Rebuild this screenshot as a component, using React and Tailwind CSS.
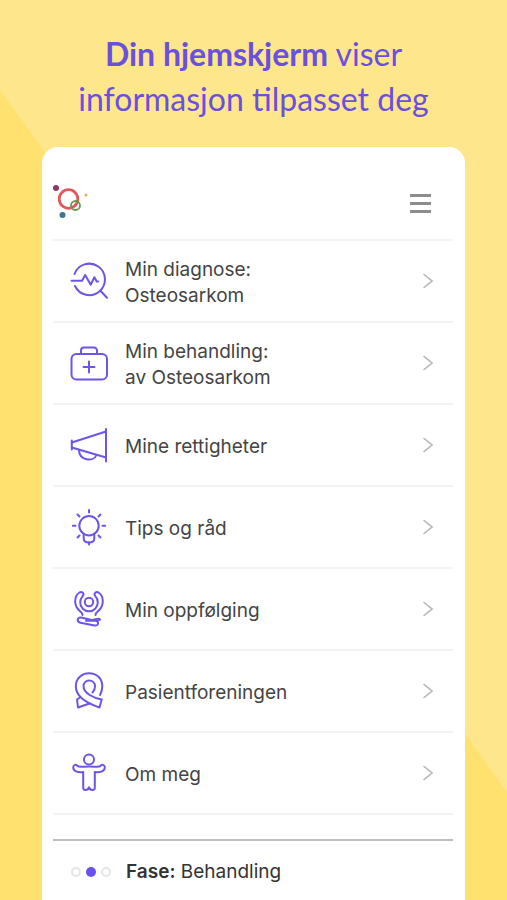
const DiagnoseIcon = () => (
  <>
    <path d="M5.500 13A15.700 15.700 0 1 1 6 25" />
    <path d="M2.500 19.700H13l3.200-5.700 5.500 9.700 3.700-7.500 2.300 4.300h1.500" />
    <path d="M31.700 30 38 36.700" />
  </>
);

const BehandlingIcon = () => (
  <>
    <rect x="2.500" y="11" width="35.500" height="25.500" rx="5" />
    <path d="M12 11V7.500a3 3 0 0 1 3-3h10a3 3 0 0 1 3 3V11" />
    <path d="M20 18.500v11M14.500 24h11" />
  </>
);

const RettigheterIcon = () => (
  <>
    <path d="M2.800 15.500v9" />
    <path d="M37 4v32.500" />
    <path d="M2.800 17.500 37 6.500M2.800 22.500 37 32.500" />
    <path d="M10 25c0 10.500 14.500 12.500 17.500 5" />
  </>
);

const TipsIcon = () => (
  <>
    <circle cx="20" cy="18.700" r="9.700" />
    <path d="M14.700 27.500v4c0 2.500 2.300 4 5.300 4s5.300-1.500 5.300-4v-4" />
    <path d="M20 35.500v2" />
    <path d="M20 3v2.500M3.800 18.700h2.700M33.500 18.700h2.700M8.500 7.500l2 2M31.500 7.500l-2 2M8.500 30.500l2-2M31.500 30.500l-2-2" />
  </>
);

const OppfolgingIcon = () => (
  <>
    <circle cx="20" cy="13" r="4.200" />
    <path d="M13.500 26c0-4.500-7.300-4-7.300-13.500 0-4 1.800-7.500 4.300-9 2.500-1.300 5 .8 3.500 3.200-1.800 2-2.800 4-2.800 6.800a8.800 8.800 0 0 0 17.600 0c0-2.800-1-4.800-2.800-6.800-1.500-2.400 1-4.500 3.500-3.200 2.500 1.500 4.300 5 4.300 9 0 9.500-7.300 9-7.300 13.500" />
    <path d="M31 30.500c-1.500 2-4 1.500-6 1l-13-3c-4-.5-4.500 4.500-.5 5.300l14 2.700c4 .5 5-4 1-4.800h-9.500M23 31c3 0 7-3 8-.5" />
  </>
);

const ForeningIcon = () => (
  <>
    <path d="M31 24c1.700-3 2.300-6 2.300-9C33.300 7.500 27.500 2.300 20 2.300S6.800 8 6.800 15.300c0 9.500 8.700 16.200 23.700 21.200l2.200-8c-8-1.500-18.200-6-18.200-13.500 0-3 2.500-5.500 5.500-5.500s6 2 6 6c0 2-1 4.500-2.500 6" />
    <path d="M11 26.500 8 28.500 9 36.500 20.500 32.500" />
  </>
);

const PersonIcon = () => (
  <>
    <circle cx="20" cy="6.500" r="5" />
    <path d="M14.200 19v16c0 2.500 4.800 2.500 5.300 0 .2-1 .8-1 1 0 .5 2.500 5.300 2.500 5.300 0V19c5.500 1 10-1 10-4.500 0-3-3.300-3.500-4.300-1.500-1.500 1.500-5.500.5-11.500.5s-10 1-11.500-.5c-1-2-4.300-1.500-4.300 1.500 0 3.500 4.500 5.500 10 4.500" />
  </>
);

const items = [
  { lines: ["Min diagnose:", "Osteosarkom"], Icon: DiagnoseIcon },
  { lines: ["Min behandling:", "av Osteosarkom"], Icon: BehandlingIcon },
  { lines: ["Mine rettigheter"], Icon: RettigheterIcon },
  { lines: ["Tips og råd"], Icon: TipsIcon },
  { lines: ["Min oppfølging"], Icon: OppfolgingIcon },
  { lines: ["Pasientforeningen"], Icon: ForeningIcon },
  { lines: ["Om meg"], Icon: PersonIcon },
];

function Logo() {
  return (
    <svg viewBox="0 0 40 36" className="h-9 w-10" fill="none" aria-hidden="true">
      <circle cx="3" cy="5" r="3" fill="#8d3a68" />
      <circle cx="15.500" cy="16" r="9.300" stroke="#dc5a5c" strokeWidth="2.800" />
      <circle cx="22.500" cy="22.500" r="4.500" stroke="#6b9a4c" strokeWidth="1.800" />
      <circle cx="33" cy="12" r="1.500" fill="#e3b34b" />
      <circle cx="9.500" cy="32" r="3" fill="#3f7590" />
    </svg>
  );
}

function MenuRow({ lines, Icon }) {
  return (
    <li className="border-b-2 border-[#f3f3f3]">
      <a href="#" className="flex h-20 items-center pl-4 pr-5">
        <svg
          viewBox="0 0 40 40"
          className="size-10 shrink-0"
          fill="none"
          stroke="#6d55e8"
          strokeWidth="2"
          strokeLinecap="round"
          strokeLinejoin="round"
          aria-hidden="true"
        >
          <Icon />
        </svg>
        <span className="ml-4 flex-1 pt-1 text-[19px] leading-[26px]">
          {lines.map((line) => (
            <span key={line} className="block">
              {line}
            </span>
          ))}
        </span>
        <svg
          viewBox="0 0 10 16"
          className="h-4 w-2.5 shrink-0"
          fill="none"
          stroke="#b5b5b5"
          strokeWidth="1.600"
          aria-hidden="true"
        >
          <path d="M.5 1 9 8 .5 15" />
        </svg>
      </a>
    </li>
  );
}

export default function App() {
  return (
    <div className="relative flex min-h-screen flex-col overflow-hidden bg-[#fee68c] px-[42px] pt-[31px] font-['Inter',sans-serif] text-[#444444]">
      <div className="absolute inset-0 bg-[#ffe170] [clip-path:polygon(0_10%,100%_88%,100%_100%,0_100%)]" />

      <h1 className="relative text-center font-['Lato',sans-serif] text-[32px] leading-[45px] font-normal text-[#6a50de]">
        <strong className="font-bold">Din hjemskjerm</strong> viser
        <br />
        informasjon tilpasset deg
      </h1>

      <main className="relative mt-[26px] flex-1 rounded-t-2xl bg-white pr-3 pl-[11px]">
        <header className="flex h-[94px] items-center justify-between border-b-2 border-[#f3f3f3] pt-4 pr-[22px]">
          <Logo />
          <button type="button" aria-label="Meny" className="flex w-[21px] flex-col gap-[5px] pt-1">
            <span className="h-[3px] w-full bg-[#8c8c8c]" />
            <span className="h-[3px] w-full bg-[#8c8c8c]" />
            <span className="h-[3px] w-full bg-[#8c8c8c]" />
          </button>
        </header>

        <nav>
          <ul>
            {items.map((item) => (
              <MenuRow key={item.lines[0]} {...item} />
            ))}
          </ul>
        </nav>

        {/* Phase indicator */}
        <section className="mt-6 flex items-center border-t-2 border-[#bdbdbd] pt-4 pl-[18px]">
          <div className="flex w-[55px] items-center gap-[5px]">
            <span className="size-2.5 rounded-full border-2 border-[#e5e5e5]" />
            <span className="size-2.5 rounded-full bg-[#6950f0]" />
            <span className="size-2.5 rounded-full border-2 border-[#e5e5e5]" />
          </div>
          <p className="text-[19px] leading-[30px] text-[#333333]">
            <strong className="font-semibold">Fase:</strong> Behandling
          </p>
        </section>
      </main>
    </div>
  );
}
